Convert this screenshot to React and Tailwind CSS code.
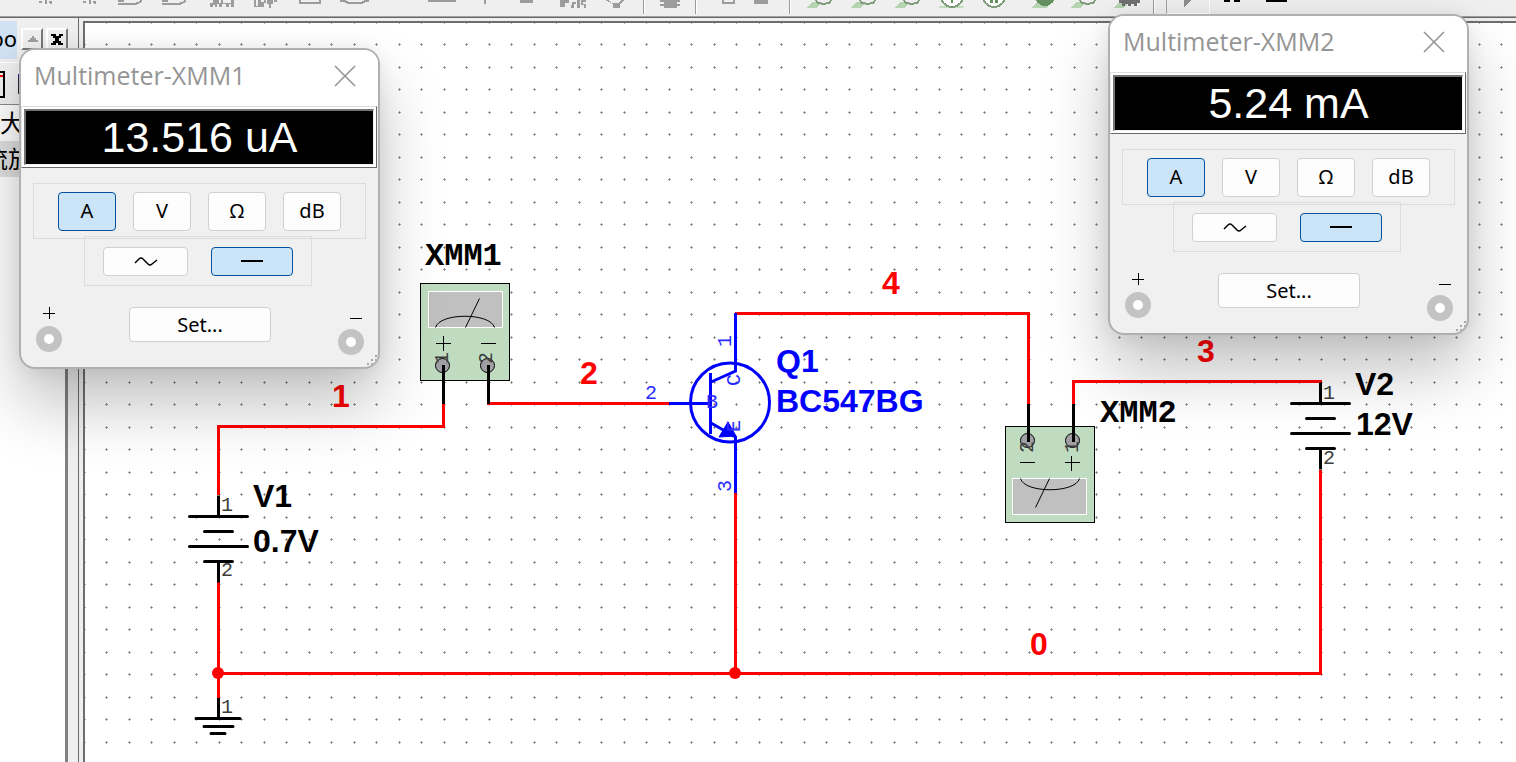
import React, { useState } from "react";

/* ---------- Toolbar ---------- */

const GREY = "#9c9c9c";

const glyphs = {
  tick: <path d="M10 0h3v2h2v3h-2v-2h-3z" fill={GREY} />,
  ants: <path d="M15 1h3v2h-3zM21 0h2v4h-2zM25 1h3v3h-2v-1h-1z" fill={GREY} />,
  gate: <path d="M6 4h14c6 0 9-1 10-5M6 1h6" fill="none" stroke={GREY} strokeWidth="2" />,
  chips: <path d="M10 3h3v-3h6v3h2v-3h2v3h8v-3h3v7h-24zM13 5v2h2v-2zM17 4v3h2v-3zM22 4v3h4v-3zM29 4v3h2v-3z" fill={GREY} fillRule="evenodd" />,
  pins: <path d="M10 0h2v6h2v-6h3v2h3v-2h2v3h-2v4h-10v-4zM23 0h6v4h-2v4h-2v-4h-2zM30 0h3v2h-3z" fill={GREY} />,
  box: <path d="M12 0v3h20v-3" fill="none" stroke={GREY} strokeWidth="2" />,
  tray: <path d="M8 1h5l3 2h14l3-2h4" fill="none" stroke={GREY} strokeWidth="2" />,
  blank: null,
  line: <path d="M8 1h28" stroke={GREY} strokeWidth="2" />,
  post: <path d="M21 0v4" stroke={GREY} strokeWidth="2" />,
  dash: <path d="M12 1h13" stroke={GREY} strokeWidth="3" />,
  rf: <path d="M8 0h9v3h-4v4h-5zM20 2h4v2h-2v4h-3zM25 0h3v8h-3zM29 0h5v2h-3v2h3v4h-2v-3h-3z" fill={GREY} />,
  motor: <path d="M9 0h4l2 3h8l2-3h3l-4 4v4h-7v-4z" fill={GREY} />,
  chip: <path d="M16 0h13v8h-13zM12 0h20v2h-20zM12 4h20v2h-20z" fill={GREY} />,
  sheet: <path d="M19 0v3h11v-3" fill="none" stroke={GREY} strokeWidth="2" />,
  block: <path d="M14 0h14v4h-14z" fill={GREY} />,
  probe: (
    <g>
      <path d="M8 8l7-6h9l-5 6z" fill="#b5d3b0" />
      <path d="M18 0c1 5 14 5 15 0" fill="none" stroke="#7f9c7b" strokeWidth="2" />
    </g>
  ),
  dial: (
    <g>
      <path d="M9 6h25l-2 2H9z" fill="#c4dcc0" />
      <circle cx="22" cy="-4" r="11" fill="#fff" stroke="#7f9c7b" strokeWidth="2" />
      <path d="M21 0v3h2v-3z" fill="#64905f" />
    </g>
  ),
  dialTwo: (
    <g>
      <circle cx="20" cy="-4" r="11" fill="#fff" stroke="#7f9c7b" strokeWidth="2" />
      <path d="M16 0v3h3v-3zM21 0v3h3v-3z" fill="#64905f" />
    </g>
  ),
  probeSolid: (
    <g>
      <path d="M13 8l6-5h14l-4 5z" fill="#b5d3b0" />
      <circle cx="27" cy="-4" r="10" fill="#64905f" />
    </g>
  ),
  probeGear: (
    <g>
      <path d="M7 8l5-5h10l-5 5z" fill="#b5d3b0" />
      <path d="M13 0h21v3h-3v3h-3v-2h-3v2h-3v-2h-3v2h-3v-3h-3z" fill="#707070" />
    </g>
  ),
  play: <path d="M17 0h8l-8 7z" fill="#8f8f8f" />,
  pause: <path d="M14 0h6v2h-6zM24 0h6v2h-6z" fill="#000" />,
  stop: <path d="M12 0h21v2H12z" fill="#000" />,
};

function Tool({ icon, label, raised, narrow }) {
  return (
    <button
      type="button"
      aria-label={label}
      className={
        "shrink-0 overflow-hidden " +
        (narrow ? "w-9 " : "w-11 ") +
        (raised ? "h-[14px] border border-t-0 border-r-white border-b-white border-l-[#a0a0a0]" : "h-4")
      }
    >
      <svg className="block h-4 w-11" viewBox="0 0 44 16" aria-hidden="true" shapeRendering="crispEdges">
        {glyphs[icon]}
      </svg>
    </button>
  );
}

function Rule() {
  return <span className="mx-[3px] h-[14px] w-[2px] shrink-0 border-l border-[#9a9a9a] bg-white" />;
}

const partTools = [
  ["tick", "Place source"],
  ["ants", "Place basic"],
  ["ants", "Place diode"],
  ["gate", "Place TTL"],
  ["gate", "Place CMOS"],
  ["chips", "Place digital"],
  ["pins", "Place mixed"],
  ["box", "Place indicator"],
  ["tray", "Place power"],
  ["blank", "Place misc"],
  ["line", "Place peripheral"],
  ["post", "Place connector"],
  ["dash", "Place module"],
  ["rf", "Place RF"],
  ["motor", "Place electromechanical"],
];

const probeTools = [
  ["probe", "Voltage probe"],
  ["probe", "Current probe"],
  ["probe", "Power probe"],
  ["dial", "Differential probe"],
  ["dialTwo", "Reference probe"],
  ["probeSolid", "Digital probe"],
  ["probe", "Combined probe"],
  ["probeGear", "Probe settings"],
];

function Toolbar() {
  return (
    <header className="flex h-4 shrink-0 items-start overflow-hidden bg-[#efefef]">
      <div className="-ml-5 flex shrink-0">
        {partTools.map(([icon, label]) => (
          <Tool key={label} icon={icon} label={label} />
        ))}
      </div>
      <Rule />
      <Tool icon="chip" label="Place MCU" />
      <Rule />
      <div className="flex shrink-0 pl-1">
        <Tool icon="sheet" label="Hierarchical block" narrow />
        <Tool icon="block" label="Place bus" narrow />
      </div>
      <span className="w-[10px] shrink-0" />
      <Rule />
      <div className="flex shrink-0 pl-1">
        {probeTools.map(([icon, label]) => (
          <Tool key={label} icon={icon} label={label} />
        ))}
      </div>
      <Rule />
      <div className="flex shrink-0 pl-2">
        <Tool icon="play" label="Run" raised />
        <Tool icon="pause" label="Pause" />
        <Tool icon="stop" label="Stop" />
      </div>
    </header>
  );
}

/* ---------- Side panel ---------- */

function PanelButton({ label, children }) {
  return (
    <button
      type="button"
      aria-label={label}
      className="flex h-[22px] w-[22px] items-center justify-center border-2 border-t-white border-r-[#787878] border-b-[#787878] border-l-white bg-[#efefef]"
    >
      <svg className="h-4 w-4 shrink-0" viewBox="0 0 16 16" aria-hidden="true" shapeRendering="crispEdges">
        {children}
      </svg>
    </button>
  );
}

function SidePanel() {
  return (
    <aside className="flex w-[79px] shrink-0 flex-col overflow-hidden border-r border-[#696969] bg-[#efefef] pt-[3px] font-['Noto_Sans','Noto_Sans_CJK_SC',sans-serif] text-black">
      <div className="flex h-[42px] shrink-0 items-start border-b border-white">
        <h2 className="flex h-[38px] w-[17px] shrink-0 items-center justify-end overflow-hidden bg-[#d0e2f3] pb-1 text-[22px] leading-none">
          oo
        </h2>
        <div className="flex gap-[3px] pt-[7px] pl-1">
          <PanelButton label="Collapse panel">
            <path d="M8 5h2v2h2v2h2v2H4V9h2V7h2z" fill="#a0a0a0" />
          </PanelButton>
          <PanelButton label="Close panel">
            <path d="M2 3h5v2h3V3h4v2h-2v2h-2v3h2v2h2v2H9v-2H7v2H2v-2h2v-2h2V7H4V5H2z" fill="#000" />
          </PanelButton>
        </div>
      </div>
      <div className="flex h-[42px] shrink-0 items-center justify-between border-b border-[#8a8a8a] pr-[54px]">
        <svg className="h-7 w-[6px]" viewBox="0 0 6 28" aria-hidden="true" shapeRendering="crispEdges">
          <path d="M0 2h4v25H0" fill="#efefef" stroke="#000" strokeWidth="2" />
          <path d="M0 5h3v2H0z" fill="#f00" />
        </svg>
        <svg className="h-5 w-[6px]" viewBox="0 0 6 20" aria-hidden="true" shapeRendering="crispEdges">
          <path d="M0 0h6v20H0z" fill="#2a2a3c" />
          <path d="M0 0h6v4H0z" fill="#24248c" />
        </svg>
      </div>
      <div className="mr-[10px] flex grow flex-col overflow-hidden border-r-[3px] border-[#808080] bg-white text-[24px] leading-9">
        <div className="shrink-0 whitespace-nowrap">大</div>
        <div className="shrink-0 bg-[#e0e0e0] whitespace-nowrap">
          <span className="-ml-4">流放大</span>
        </div>
      </div>
    </aside>
  );
}

/* ---------- Schematic ---------- */

function Label({ x, y, color = "#000", anchor = "start", children }) {
  return (
    <text x={x} y={y} fill={color} textAnchor={anchor} className="font-['Liberation_Sans',sans-serif] text-[32px] font-bold">
      {children}
    </text>
  );
}

function Pin({ x, y, color = "#3c3c3c", turned, children }) {
  return (
    <text
      x={x}
      y={y}
      fill={color}
      transform={turned ? `rotate(-90 ${x} ${y})` : undefined}
      className="font-['Liberation_Mono',monospace] text-[20px]"
    >
      {children}
    </text>
  );
}

function Battery({ x, y }) {
  return (
    <g transform={`translate(${x} ${y})`} stroke="#000" strokeWidth="3" strokeLinecap="round">
      <path d="M0-21V0M0 45V66" strokeLinecap="butt" />
      <path d="M-29 0H29M-14 15H14M-29 30H29M-14 45H14" />
    </g>
  );
}

function MeterFace({ flipped, depth = 97 }) {
  return (
    <g>
      <rect x="0" y="0" width="89" height={depth} fill="#c0dcc0" stroke="#000" shapeRendering="crispEdges" />
      <g transform={flipped ? `rotate(180 44.5 ${depth / 2})` : undefined}>
        <rect x="8" y="8" width="74" height="36" fill="#c0c0c0" stroke="#fff" shapeRendering="crispEdges" />
        <path d="M15 44C19 29 70 29 74 44M45 44L59 15" fill="none" stroke="#000" />
        <path d="M15 60h15M23 52v15M60 60h15" stroke="#000" strokeWidth="1" shapeRendering="crispEdges" />
        <circle cx="22" cy="82" r="7" fill="#a0a0a4" stroke="#000" />
        <circle cx="67" cy="82" r="7" fill="#a0a0a4" stroke="#000" />
      </g>
    </g>
  );
}

function Schematic() {
  return (
    <svg className="block h-full w-full" role="img" aria-label="BC547BG transistor test circuit">
      <g transform="translate(-85 -23)">
        <defs>
          <pattern id="grid" x="82" y="20" width="45" height="45" patternUnits="userSpaceOnUse">
            <path
              d="M1 2h3v1H1zM2 1h1v3H2zM23 2h3v1h-3zM24 1h1v3h-1zM1 24h3v1H1zM2 23h1v3H2zM23 24h3v1h-3zM24 23h1v3h-1z"
              fill="#a4a4a4"
              shapeRendering="crispEdges"
            />
            <path d="M2 2h1v1H2zM24 2h1v1h-1zM2 24h1v1H2zM24 24h1v1h-1z" fill="#7c7c7c" shapeRendering="crispEdges" />
          </pattern>
        </defs>
        <rect x="85" y="23" width="100%" height="100%" fill="url(#grid)" />

        <g fill="none" stroke="#f00" strokeWidth="3">
          <path d="M218.5 495V426.5H443.5V403" />
          <path d="M487 403.5H670" />
          <path d="M735 313.5H1028.5V405" />
          <path d="M1073.5 405V381.5H1322" />
          <path d="M218.5 582V698M735.5 493V673M218 673.5H1320.5V470" />
        </g>
        <circle cx="218" cy="673" r="6" fill="#f00" />
        <circle cx="735" cy="673" r="6" fill="#f00" />

        <Battery x={218.5} y={516.5} />
        <Pin x={221} y={511}>1</Pin>
        <Pin x={221} y={576}>2</Pin>
        <Label x={253} y={507}>V1</Label>
        <Label x={253} y={552}>0.7V</Label>

        <g stroke="#000" strokeWidth="3" strokeLinecap="round">
          <path d="M218.5 698V718" strokeLinecap="butt" />
          <path d="M196 718.5H240M204 726.5H233M211 733.5H225" />
        </g>
        <Pin x={221} y={713}>1</Pin>

        <Battery x={1320.5} y={403.5} />
        <Pin x={1323} y={399}>1</Pin>
        <Pin x={1323} y={464}>2</Pin>
        <Label x={1355} y={395}>V2</Label>
        <Label x={1356} y={435}>12V</Label>

        <g transform="translate(420.5 283.5)">
          <MeterFace />
        </g>
        <Pin x={448} y={364} turned>1</Pin>
        <Pin x={492} y={364} turned>2</Pin>
        <path d="M443.5 365V404M488.5 365V404" stroke="#000" strokeWidth="3" />
        <text x="425" y="265" className="font-['Liberation_Mono',monospace] text-[32px] font-bold">
          XMM1
        </text>

        <g transform="translate(1005.5 426.5)">
          <MeterFace flipped depth={96} />
        </g>
        <Pin x={1033} y={453} turned>2</Pin>
        <Pin x={1078} y={453} turned>1</Pin>
        <path d="M1028.5 404V442M1073.5 404V442" stroke="#000" strokeWidth="3" />
        <text x="1100" y="422" className="font-['Liberation_Mono',monospace] text-[32px] font-bold">
          XMM2
        </text>

        <g fill="none" stroke="#00f" strokeWidth="3">
          <circle cx="730" cy="402.5" r="39.5" />
          <path d="M669 403.5H710M710.5 373V434M735.5 313V371L711 382M711 423L735.5 437V493" />
          <path d="M728 422L719 437L736 436Z" fill="#00f" strokeWidth="1" />
        </g>
        <Pin x={645} y={399} color="#2a2aff">2</Pin>
        <Pin x={706} y={408} color="#2a2aff">B</Pin>
        <Pin x={731} y={347} color="#2a2aff" turned>1</Pin>
        <Pin x={740} y={386} color="#2a2aff" turned>C</Pin>
        <Pin x={740} y={432} color="#2a2aff" turned>E</Pin>
        <Pin x={731} y={492} color="#2a2aff" turned>3</Pin>
        <Label x={776} y={372} color="#00f">Q1</Label>
        <Label x={776} y={412} color="#00f">BC547BG</Label>

        <Label x={341} y={407} color="#f00" anchor="middle">1</Label>
        <Label x={589} y={384} color="#f00" anchor="middle">2</Label>
        <Label x={1206} y={362} color="#f00" anchor="middle">3</Label>
        <Label x={891} y={294} color="#f00" anchor="middle">4</Label>
        <Label x={1039} y={655} color="#f00" anchor="middle">0</Label>
      </g>
    </svg>
  );
}

/* ---------- Multimeter window ---------- */

function MeterButton({ pressed, onClick, label, className, children }) {
  return (
    <button
      type="button"
      aria-pressed={pressed}
      aria-label={label}
      onClick={onClick}
      className={
        "flex items-center justify-center rounded-[4px] border text-[20px] leading-none " +
        (pressed ? "border-[#00539c] bg-[#cce4f7] " : "border-[#d0d0d0] bg-[#fdfdfd] ") +
        className
      }
    >
      {children}
    </button>
  );
}

function Terminal() {
  return <span className="block h-[26px] w-[26px] rounded-full border-8 border-[#c3c3c3] bg-white" />;
}

function Multimeter({ name, reading, place }) {
  const [quantity, setQuantity] = useState("A");
  const [mode, setMode] = useState("dc");
  return (
    <section
      aria-label={name}
      className={
        "absolute flex h-[321px] w-[361px] flex-col overflow-hidden rounded-[16px] border-2 border-[#b0b0b0] bg-[#f0f0f0] font-['Noto_Sans',sans-serif] text-black shadow-[0_36px_64px_rgba(0,0,0,0.24),0_2px_20px_rgba(0,0,0,0.08)] " +
        place
      }
    >
      <div className="flex h-[56px] shrink-0 items-center justify-between bg-white pr-5 pb-1 pl-[13px]">
        <h1 className="font-['Open_Sans',sans-serif] text-[25px] text-[#959595]">{name}</h1>
        <button type="button" aria-label="Close" className="p-[2px]">
          <svg className="h-[22px] w-[22px]" viewBox="0 0 22 22" aria-hidden="true">
            <path d="M1 1L21 21M21 1L1 21" stroke="#949494" strokeWidth="1.6" />
          </svg>
        </button>
      </div>
      <div className="mr-px shrink-0 border border-t-[#dcdcdc] border-r-[#696969] border-b-[#696969] border-l-[#e4e4e4] bg-white p-[2px]">
        <output className="flex h-14 items-center justify-center border-t-2 border-r border-b border-l-2 border-t-[#757575] border-r-[#f0f0f0] border-b-[#f0f0f0] border-l-[#757575] bg-black font-['Liberation_Sans',sans-serif] text-[43px] text-white">
          {reading}
        </output>
      </div>
      <div className="mr-3 ml-3 mt-[15px] flex h-14 shrink-0 items-center justify-center gap-[17px] border border-[#dcdcdc]">
        {["A", "V", "Ω", "dB"].map((q) => (
          <MeterButton key={q} pressed={q === quantity} onClick={() => setQuantity(q)} className="h-[39px] w-[58px]">
            {q}
          </MeterButton>
        ))}
      </div>
      <div className="-mt-[3px] mr-[66px] ml-[63px] flex h-[50px] shrink-0 items-center justify-center gap-[23px] border border-[#dcdcdc]">
        <MeterButton label="AC" pressed={mode === "ac"} onClick={() => setMode("ac")} className="h-[29px] w-[85px]">
          <svg className="h-3 w-6" viewBox="0 0 24 12" aria-hidden="true">
            <path d="M1 8L5 4Q7 2 9 4L14 9Q16 11 18 9L23 5" fill="none" stroke="#000" strokeWidth="1.5" />
          </svg>
        </MeterButton>
        <MeterButton label="DC" pressed={mode === "dc"} onClick={() => setMode("dc")} className="h-[29px] w-[82px]">
          <span className="h-[2px] w-[22px] bg-black" />
        </MeterButton>
      </div>
      <div className="flex grow items-start justify-between pt-[21px] pr-[14px] pl-[15px]">
        <div className="flex flex-col items-center gap-[7px] text-[20px] leading-none">
          <svg className="h-3 w-3" viewBox="0 0 12 12" aria-hidden="true" shapeRendering="crispEdges">
            <path d="M0 6h12M6 0v12" stroke="#000" strokeWidth="1" />
          </svg>
          <Terminal />
        </div>
        <MeterButton className="h-[35px] w-[142px]">Set...</MeterButton>
        <div className="flex flex-col items-end gap-[10px]">
          <span className="mt-[11px] mr-[2px] h-px w-3 bg-black" />
          <Terminal />
        </div>
      </div>
      <svg className="absolute right-0 bottom-0 h-3 w-3" viewBox="0 0 12 12" aria-hidden="true" shapeRendering="crispEdges">
        <path d="M9 0h2v2H9zM5 4h2v2H5zM9 4h2v2H9zM1 8h2v2H1zM5 8h2v2H5z" fill="#a8a8a8" />
      </svg>
    </section>
  );
}

export default function App() {
  return (
    <div className="relative flex h-screen min-h-96 w-full flex-col overflow-hidden bg-[#efefef]">
      <Toolbar />
      <div className="h-[2px] shrink-0 border-t border-b border-t-[#a0a0a0] border-b-[#696969]" />
      <div className="flex min-h-0 grow">
        <SidePanel />
        <main className="ml-1 min-w-0 grow overflow-hidden pt-[3px]">
          <div className="h-full border-t-2 border-l-2 border-[#6e6e6e] bg-white">
            <Schematic />
          </div>
        </main>
      </div>
      <Multimeter name="Multimeter-XMM1" reading="13.516 uA" place="top-12 left-[19px]" />
      <Multimeter name="Multimeter-XMM2" reading="5.24 mA" place="top-[14px] left-[1108px]" />
    </div>
  );
}
